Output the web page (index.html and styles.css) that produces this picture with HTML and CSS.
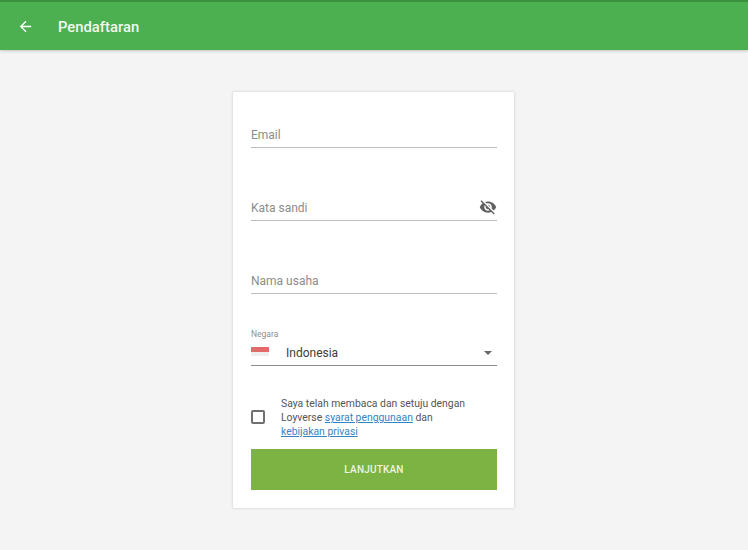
FILE: index.html
```html
<!DOCTYPE html>
<html lang="id">
<head>
<meta charset="utf-8">
<title>Pendaftaran</title>
<link rel="stylesheet" href="styles.css">
</head>
<body>
<header class="appbar">
  <svg class="back" viewBox="0 0 24 24" width="17" height="17"><path fill="#fff" d="M20 11H7.83l5.59-5.59L12 4l-8 8 8 8 1.41-1.41L7.83 13H20z"/></svg>
  <h1 class="title">Pendaftaran</h1>
</header>
<main class="page">
  <form class="card">
    <div class="field"><span class="placeholder">Email</span></div>
    <div class="field field-gap">
      <span class="placeholder">Kata sandi</span>
      <svg class="eye" viewBox="0 0 24 24" width="18" height="18"><path fill="#616161" d="M12 7c2.76 0 5 2.24 5 5 0 .65-.13 1.26-.36 1.83l2.92 2.92c1.51-1.26 2.7-2.89 3.43-4.75-1.73-4.39-6-7.5-11-7.5-1.4 0-2.74.25-3.98.7l2.16 2.16C10.74 7.13 11.35 7 12 7zM2 4.27l2.28 2.28.46.46C3.08 8.3 1.78 10.02 1 12c1.73 4.39 6 7.5 11 7.5 1.55 0 3.03-.3 4.38-.84l.42.42L19.73 22 21 20.73 3.27 3 2 4.27zM7.53 9.8l1.55 1.55c-.05.21-.08.43-.08.65 0 1.66 1.34 3 3 3 .22 0 .44-.03.65-.08l1.55 1.55c-.67.33-1.41.53-2.2.53-2.76 0-5-2.24-5-5 0-.79.2-1.53.53-2.2zm4.31-.78l3.15 3.15.02-.16c0-1.66-1.34-3-3-3l-.17.01z"/></svg>
    </div>
    <div class="field field-gap"><span class="placeholder">Nama usaha</span></div>
    <div class="select">
      <span class="select-label">Negara</span>
      <div class="select-row">
        <span class="flag"></span>
        <span class="select-value">Indonesia</span>
        <span class="caret"></span>
      </div>
    </div>
    <div class="terms">
      <span class="checkbox"></span>
      <p class="terms-text">Saya telah membaca dan setuju dengan Loyverse <a href="#">syarat penggunaan</a> dan <a href="#">kebijakan privasi</a></p>
    </div>
    <button class="submit" type="button">LANJUTKAN</button>
  </form>
</main>
</body>
</html>
```

FILE: styles.css
```css
* { box-sizing: border-box; }
html, body { margin: 0; height: 100%; }
body {
  background: #f4f4f4;
  font-family: Roboto, "Liberation Sans", sans-serif;
  color: #333;
  overflow: hidden;
}
.appbar {
  height: 50px;
  display: flex;
  align-items: center;
  padding: 0 0 0 17px;
  background: #4caf50;
  border-top: 2px solid #3c9140;
  box-shadow: 0 1px 3px rgba(0, 0, 0, .2);
}
.back { flex: none; }
.title {
  margin: 1px 0 0 24px;
  font-size: 14.8px;
  font-weight: 500;
  color: #fff;
  opacity: .92;
}
.page {
  display: flex;
  justify-content: center;
  padding-top: 42px;
  padding-right: 1px;
}
.card {
  width: 281px;
  height: 416px;
  padding: 0 17px 0 18px;
  background: #fff;
  box-shadow: 0 0 3px rgba(0, 0, 0, .18);
  border-radius: 1px;
}
.field {
  height: 56px;
  display: flex;
  align-items: flex-end;
  justify-content: space-between;
  padding-bottom: 4px;
  border-bottom: 1px solid #bdbdbd;
}
.field-gap { margin-top: 17px; height: 56px; }
.placeholder { font-size: 12px; line-height: 16px; color: #8c8c8c; }
.eye { margin: 0; }
.select { margin-top: 35px; height: 37px; border-bottom: 1px solid #8a8a8a; }
.select-label { display: block; font-size: 8.5px; line-height: 11px; color: #909090; }
.select-row { display: flex; align-items: center; height: 24px; margin-top: 1px; }
.flag {
  width: 18px;
  height: 9px;
  margin-top: -3px;
  background: linear-gradient(#e36a6a 0 55%, #eeeeee 55% 100%);
  flex: none;
}
.select-value { margin-left: 17px; font-size: 12px; color: #3c3c3c; flex: 1; }
.caret {
  width: 0;
  height: 0;
  margin-right: 5px;
  border-left: 4px solid transparent;
  border-right: 4px solid transparent;
  border-top: 4px solid #666;
}
.terms { display: flex; align-items: center; margin-top: 31px; }
.checkbox {
  width: 14px;
  height: 14px;
  flex: none;
  border: 2px solid #707070;
  border-radius: 2px;
  margin-top: -3px;
}
.terms-text {
  margin: 0 0 0 16px;
  width: 192px;
  font-size: 10.4px;
  line-height: 14px;
  color: #555;
}
.terms-text a { color: #3484c4; }
.submit {
  display: block;
  width: 100%;
  height: 41px;
  margin-top: 10px;
  border: 0;
  background: #7cb342;
  color: #eef5e3;
  font: 500 10px Roboto, "Liberation Sans", sans-serif;
  letter-spacing: .2px;
}
```
